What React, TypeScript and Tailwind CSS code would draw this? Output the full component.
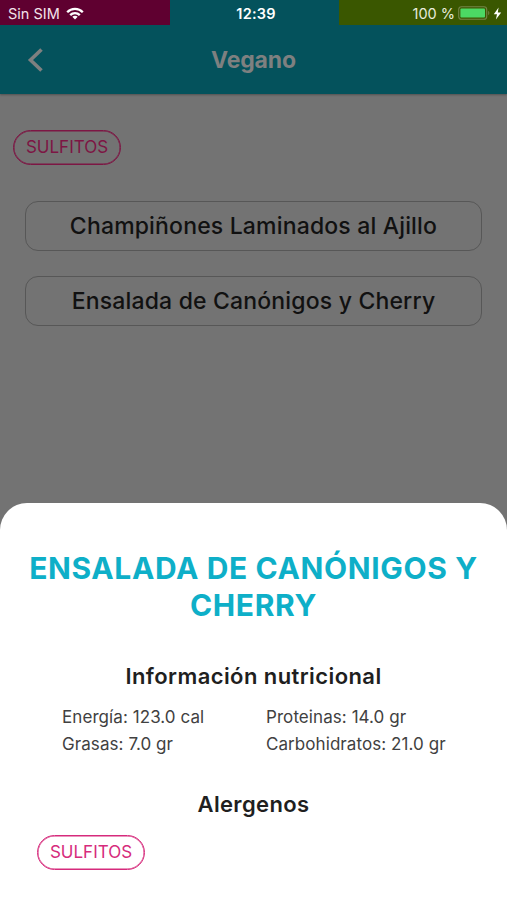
import React from "react";

const dishes = ["Champiñones Laminados al Ajillo", "Ensalada de Canónigos y Cherry"];

const nutrition = [
    { label: "Energía", value: "123.0 cal" },
    { label: "Proteinas", value: "14.0 gr" },
    { label: "Grasas", value: "7.0 gr" },
    { label: "Carbohidratos", value: "21.0 gr" },
];

const StatusBar: React.FC = () => {
    return (
        <div className="grid grid-cols-[169.5px_169px_1fr] h-[25px] text-white text-[14.5px] leading-[22px]">
            <div className="bg-[#5f0030] flex items-center pl-[8px] text-[#f3e3ea]">
                <span className="pt-[3px]">Sin SIM</span>
                <svg className="ml-[6px] mt-[1px]" width="18" height="13" viewBox="0 0 18 13" fill="none" stroke="#fff" strokeWidth="2.3">
                    <path d="M1.2 5.2C5.5 0.7 12.5 0.7 16.8 5.2" />
                    <path d="M4.2 8.1C6.9 5.4 11.1 5.4 13.8 8.1" />
                    <path d="M6.3 9.8C7.8 8.4 10.2 8.4 11.7 9.8L9 12.6Z" fill="#fff" stroke="none" />
                </svg>
            </div>
            <div className="flex items-center justify-center pt-[3px] pl-[4px] font-semibold tracking-[0.2px]">12:39</div>
            <div className="bg-[#3a5700] flex items-center justify-end pr-[5px] text-[#e8ecdc]">
                <span className="pt-[3px]">100 %</span>
                <svg className="ml-[3px] mt-[1px]" width="33" height="14" viewBox="0 0 33 14">
                    <rect x="0.7" y="0.7" width="28" height="12.6" rx="2.8" fill="none" stroke="#748547" strokeWidth="1.1" />
                    <rect x="2.4" y="2.4" width="24.6" height="9.2" rx="1" fill="#4cd964" />
                    <path d="M30.2 4.8C31.8 5.6 31.8 8.4 30.2 9.2Z" fill="#748547" />
                </svg>
                <svg className="ml-[2px] mt-[1px]" width="9" height="13" viewBox="0 0 9 13">
                    <path d="M5.6 0.5L0.8 7.3H4L2.9 12.5L8.2 5.4H4.8Z" fill="#fff" />
                </svg>
            </div>
        </div>
    );
};

const Header: React.FC = () => {
    return (
        <header className="bg-[#04525c] h-[94px] shadow-[0_1px_2px_rgba(0,0,0,0.3)]">
            <StatusBar />
            <div className="grid grid-cols-[70px_1fr_70px] items-center h-[69px] text-[#7e8080]">
                <svg className="ml-[27px]" width="18" height="26" viewBox="0 0 18 26" fill="none" stroke="currentColor" strokeWidth="3.6">
                    <path d="M14.5 2.5L3.5 13L14.5 23.5" />
                </svg>
                <h1 className="pt-[2px] text-center text-[23px] font-bold tracking-[-0.15px]">Vegano</h1>
            </div>
        </header>
    );
};

const App: React.FC = () => {
    return (
        <div className="w-[507px] h-[900px] overflow-hidden bg-[#737373] font-['Inter',sans-serif]">
            {/* Dimmed menu screen */}
            <div className="h-[503px]">
                <Header />
                <div className="pt-[36px] pl-[13px]">
                    <span className="flex items-center justify-center w-[108px] h-[35px] pt-[1px] rounded-full border border-[#7d1644] shadow-[inset_0_0_0_0.5px_#7d1644] text-[#7d1644] text-[17px]">
                        SULFITOS
                    </span>
                </div>
                <div className="flex flex-col gap-[25px] px-[25px] pt-[36px]">
                    {dishes.map((dish) => (
                        <button key={dish} className="h-[50px] rounded-[13px] border border-[#575757] text-[#111] text-[23px] font-medium tracking-[0.17px] whitespace-nowrap">
                            {dish}
                        </button>
                    ))}
                </div>
            </div>

            {/* Bottom sheet */}
            <section className="h-[397px] bg-white rounded-t-[27px] pt-[47px] text-[#1f1f1f]">
                <h2 className="text-center text-[#0eafc8] text-[30px] leading-[37px] font-bold tracking-[0.62px] whitespace-nowrap">
                    ENSALADA DE CANÓNIGOS Y<br />CHERRY
                </h2>
                <h3 className="mt-[38px] text-center text-[22px] leading-[28px] font-semibold tracking-[0.42px]">Información nutricional</h3>
                <div className="grid grid-cols-[204px_1fr] mt-[14px] pl-[62px] text-[#414141] text-[17px] leading-[27px] tracking-[0.07px]">
                    {nutrition.map((item) => (
                        <p key={item.label}><span>{item.label}: {item.value}</span></p>
                    ))}
                </div>
                <h3 className="mt-[32px] text-center text-[22px] leading-[28px] font-semibold tracking-[0.35px]">Alergenos</h3>
                <span className="flex items-center justify-center w-[108px] h-[35px] ml-[37px] mt-[17px] pt-[1px] rounded-full border border-[#d62b7c] shadow-[inset_0_0_0_0.5px_#d62b7c] text-[#d62b7c] text-[17px]">
                    SULFITOS
                </span>
            </section>
        </div>
    );
};

export default App;
